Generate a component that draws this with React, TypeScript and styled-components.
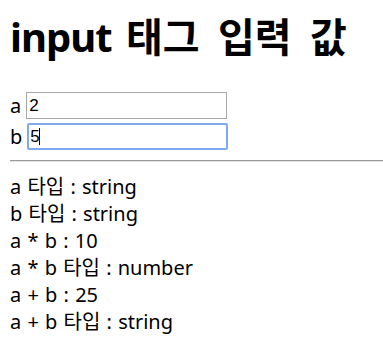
import { useState } from "react";
import styled, { createGlobalStyle } from "styled-components";

const GlobalStyle = createGlobalStyle({
  "html, body": {
    margin: 0,
    padding: 0,
    background: "#fff",
    overflow: "hidden",
  },
  body: {
    fontFamily: '"Noto Sans", "Noto Sans CJK KR", sans-serif',
    color: "#000",
  },
});

const Page = styled.div({
  display: "flex",
  flexDirection: "column",
  paddingLeft: "10px",
  width: "373px",
});

const Title = styled.h1({
  margin: "17px 0 0",
  fontSize: "40px",
  lineHeight: "40px",
  fontWeight: 700,
  whiteSpace: "nowrap",
  wordSpacing: "4px",
});

const TitleLatin = styled.span({
  letterSpacing: "-1px",
});

const TitleKorean = styled.span({
  wordSpacing: "8px",
});

const Fields = styled.div({
  display: "flex",
  flexDirection: "column",
  gap: "4px",
  marginTop: "35px",
});

const FieldRow = styled.label({
  display: "flex",
  alignItems: "center",
  height: "27px",
  fontSize: "20px",
  gap: "5px",
});

const FieldName = styled.span({
  display: "inline-block",
  lineHeight: "27px",
});

const InputWrap = styled.span({
  position: "relative",
  display: "inline-flex",
});

const TextInput = styled.input<{ $active?: boolean }>(({ $active }) => ({
  boxSizing: "border-box",
  width: "201px",
  height: "27px",
  margin: 0,
  padding: $active ? "0 1px" : "0 2px",
  fontFamily: '"Liberation Sans", Arial, sans-serif',
  fontSize: "17px",
  color: "#000",
  background: "#fff",
  border: $active ? "2px solid #7fa9f0" : "1px solid #a9a9a9",
  borderRadius: $active ? "2px" : "0",
  outline: "none",
  caretColor: "transparent",
}));

const Caret = styled.span({
  position: "absolute",
  left: "12px",
  top: "5px",
  width: "1px",
  height: "17px",
  background: "#000",
});

const Divider = styled.hr({
  margin: "10px 0 0",
  border: 0,
  borderTop: "1px solid #9a9a9a",
  borderBottom: "1px solid #e6e6e6",
  height: 0,
});

const Results = styled.div({
  display: "flex",
  flexDirection: "column",
  marginTop: "11px",
  fontSize: "20px",
  lineHeight: "27px",
  wordSpacing: "1px",
});

const Line = styled.div({
  whiteSpace: "nowrap",
});

const App = () => {
  const [a, setA] = useState("2");
  const [b, setB] = useState("5");

  const product = Number(a) * Number(b);
  const sum = a + b;

  return (
    <>
      <GlobalStyle />
      <Page>
        <Title>
          <TitleLatin>input</TitleLatin> <TitleKorean>태그 입력 값</TitleKorean>
        </Title>
        <Fields>
          <FieldRow>
            <FieldName>a</FieldName>
            <TextInput value={a} onChange={(e) => setA(e.target.value)} />
          </FieldRow>
          <FieldRow>
            <FieldName>b</FieldName>
            <InputWrap>
              <TextInput $active value={b} onChange={(e) => setB(e.target.value)} />
              <Caret />
            </InputWrap>
          </FieldRow>
        </Fields>
        <Divider />
        <Results>
          <Line>a 타입 : {typeof a}</Line>
          <Line>b 타입 : {typeof b}</Line>
          <Line>a * b : {product}</Line>
          <Line>a * b 타입 : {typeof product}</Line>
          <Line>a + b : {sum}</Line>
          <Line>a + b 타입 : {typeof sum}</Line>
        </Results>
      </Page>
    </>
  );
};

export default App;
